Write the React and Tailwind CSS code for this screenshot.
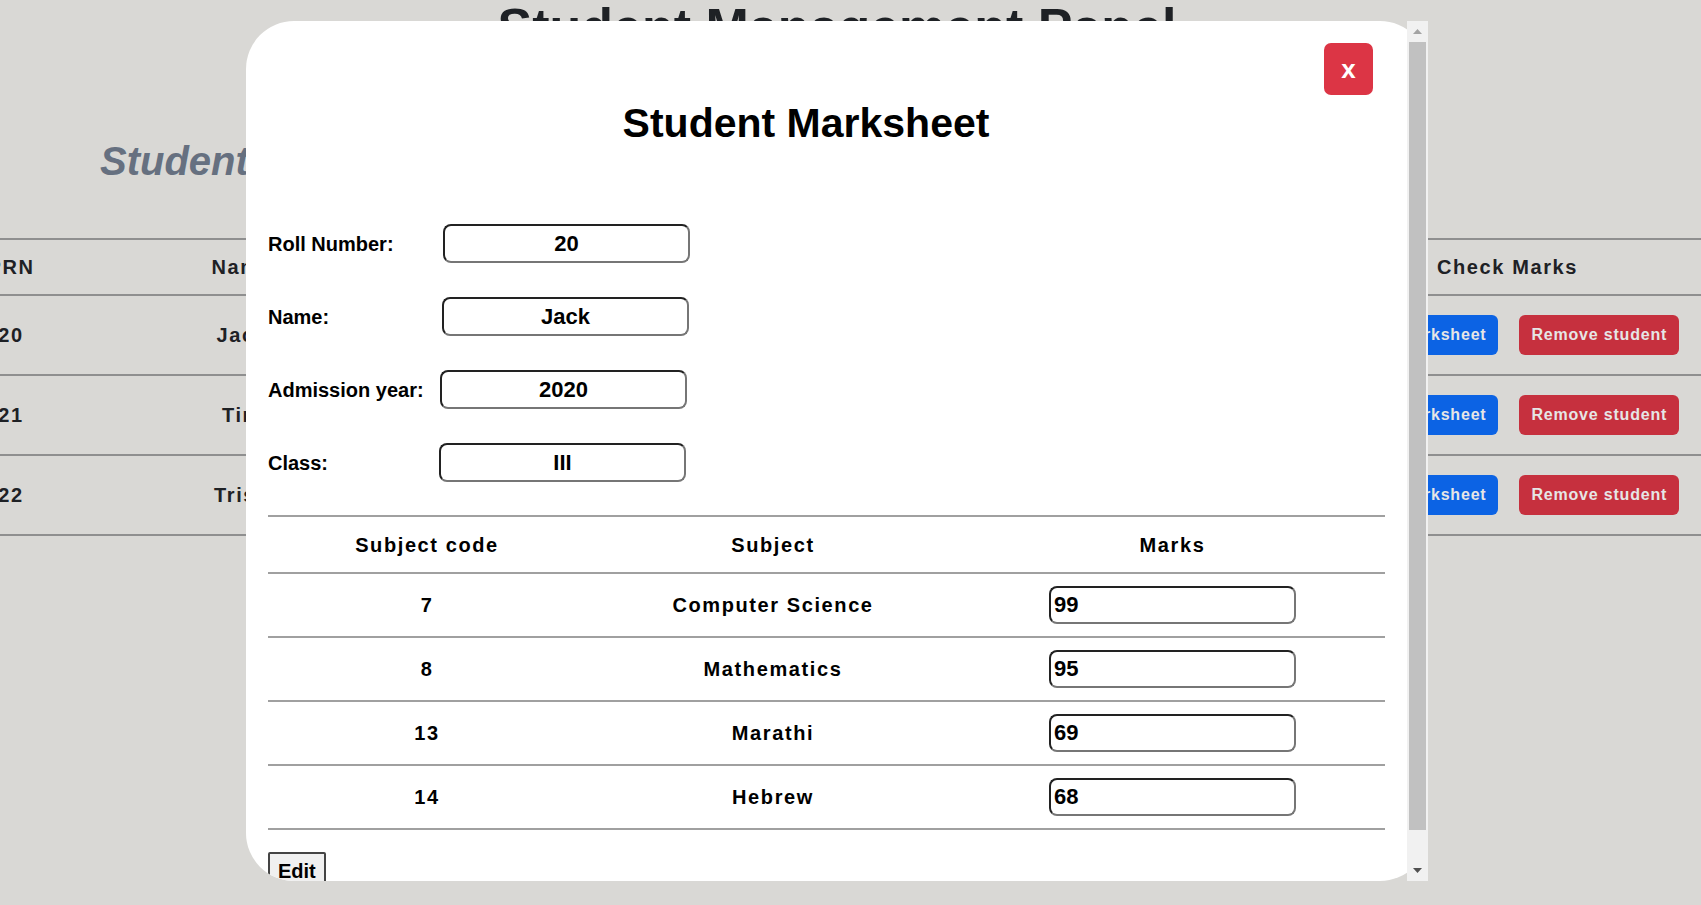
import React from 'react';

const students = [
    {prn: '20', name: 'Jack', year: '2020', cls: 'III'},
    {prn: '21', name: 'Tim', year: '2021', cls: 'II'},
    {prn: '22', name: 'Trish', year: '2022', cls: 'I'},
];

const details = [
    {label: 'Roll Number:', value: '20', shift: 'ml-[1px]'},
    {label: 'Name:', value: 'Jack', shift: 'ml-0'},
    {label: 'Admission year:', value: '2020', shift: '-ml-[2px]'},
    {label: 'Class:', value: 'III', shift: '-ml-[3px]'},
];

const marks = [
    {code: '7', subject: 'Computer Science', marks: '99'},
    {code: '8', subject: 'Mathematics', marks: '95'},
    {code: '13', subject: 'Marathi', marks: '69'},
    {code: '14', subject: 'Hebrew', marks: '68'},
];

const inputBorder = 'border-2 border-t-[#222] border-l-[#222] border-b-[#767676] border-r-[#767676] rounded-lg bg-white outline-none';

function StudentTable() {
    const cols = 'grid grid-cols-[162px_300px_462px_464px_374px_1fr] items-center text-center';
    return (
        <div className="mt-[57px] w-[1800px] -ml-[70px] border-t-2 border-[#8f8f8f] text-[20px] font-bold tracking-[1.6px] text-[#1e2125]">
            <div className={cols + ' h-[56px] border-b-2 border-[#8f8f8f]'}>
                <div>PRN</div>
                <div>Name</div>
                <div>Admission Year</div>
                <div>Class</div>
                <div className="pl-[5px]">Check Marks</div>
                <div/>
            </div>
            {students.map((s) => (
                <div key={s.prn} className={cols + ' h-[80px] border-b-2 border-[#8f8f8f]'}>
                    <div>{s.prn}</div>
                    <div>{s.name}</div>
                    <div>{s.year}</div>
                    <div>{s.cls}</div>
                    <div className="flex items-center justify-center gap-[21px] tracking-[0.8px]">
                        <button className="h-[40px] rounded-[6px] bg-[#0c63e4] px-[12px] text-[16px] font-bold text-[#e6e6e6]">Check Marksheet</button>
                        <button className="h-[40px] rounded-[6px] bg-[#c6303e] px-[12px] text-[16px] font-bold text-[#e6e6e6]">Remove student</button>
                    </div>
                    <div/>
                </div>
            ))}
        </div>
    );
}

// the modal's vertical scrollbar, scrolled to the top
function ScrollBar() {
    return (
        <div className="absolute right-0 top-0 flex h-full w-[21px] flex-col bg-[#f1f1f1]">
            <div className="flex h-[21px] items-center justify-center">
                <svg width="9" height="5" viewBox="0 0 9 5"><polygon points="0,5 4.5,0 9,5" fill="#a3a3a3"/></svg>
            </div>
            <div className="mx-[2px] h-[788px] bg-[#c1c1c1]"/>
            <div className="flex-1"/>
            <div className="flex h-[21px] items-center justify-center">
                <svg width="9" height="5" viewBox="0 0 9 5"><polygon points="0,0 9,0 4.5,5" fill="#505050"/></svg>
            </div>
        </div>
    );
}

function Marksheet() {
    const cols = 'grid grid-cols-[318px_374px_1fr] items-center text-center';
    return (
        <div className="absolute left-[246px] top-[21px] h-[860px] w-[1182px]">
            <div className="h-full w-full overflow-hidden rounded-[48px] bg-white pt-[22px] pl-[22px] pr-[43px] text-black">
                <div className="flex justify-end">
                    <button className="mr-[12px] flex h-[52px] w-[49px] items-center justify-center rounded-[7px] bg-[#dc3545] text-[26px] font-bold leading-none text-white">x</button>
                </div>
                <h2 className="mt-[8px] pr-[41px] text-center text-[41px] font-bold leading-none">Student Marksheet</h2>

                <div className="mt-[80px] flex flex-col gap-[34px]">
                    {details.map((d) => (
                        <div key={d.label} className="flex h-[39px] items-center">
                            <label className="w-[174px] shrink-0 text-[20px] font-bold">{d.label}</label>
                            <input
                                defaultValue={d.value}
                                className={inputBorder + ' h-[39px] w-[247px] text-center text-[22px] font-bold ' + d.shift}
                            />
                        </div>
                    ))}
                </div>

                <div className="mt-[33px] border-t-2 border-[#a0a0a0] text-[20px] font-bold tracking-[1.6px]">
                    <div className={cols + ' h-[57px] border-b-2 border-[#a0a0a0]'}>
                        <div>Subject code</div>
                        <div>Subject</div>
                        <div>Marks</div>
                    </div>
                    {marks.map((m) => (
                        <div key={m.code} className={cols + ' h-[64px] border-b-2 border-[#a0a0a0]'}>
                            <div>{m.code}</div>
                            <div>{m.subject}</div>
                            <div className="flex justify-center">
                                <input
                                    defaultValue={m.marks}
                                    className={inputBorder + ' h-[38px] w-[247px] px-[3px] text-left text-[22px] font-bold tracking-normal'}
                                />
                            </div>
                        </div>
                    ))}
                </div>

                <button className="mt-[22px] rounded-[2px] border-2 border-[#444] bg-[#f0f0f0] px-[8px] py-[6px] text-[20px] font-bold leading-[23px]">Edit</button>
            </div>
            <ScrollBar/>
        </div>
    );
}

export default function App() {
    return (
        <div className="relative h-[905px] w-full overflow-hidden bg-[#d9d8d5] font-['Liberation_Sans',Arial,sans-serif]">
            <div className="w-[1674px]">
                <h1 className="pt-[1px] text-center text-[52px] font-bold leading-none text-[#1e2125]">Student Management Panel</h1>
                <h2 className="mt-[88px] pl-[100px] text-[40px] font-bold italic leading-none text-[#667080]">Student Details</h2>
            </div>
            <StudentTable/>
            <Marksheet/>
        </div>
    );
}
